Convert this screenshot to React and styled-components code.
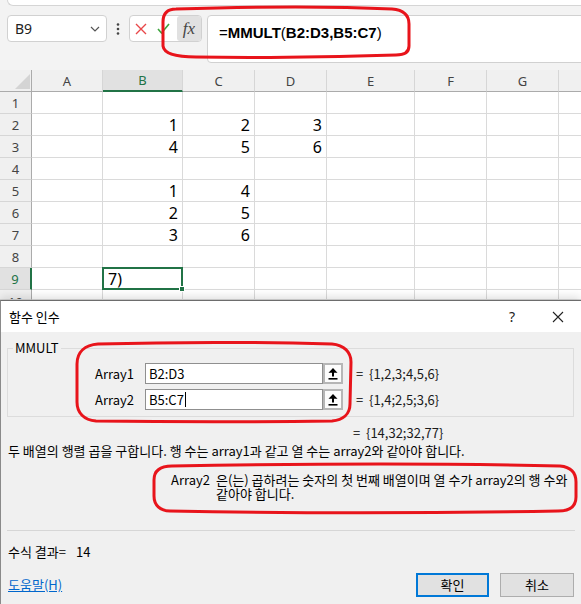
import React from 'react';
import styled, { createGlobalStyle } from 'styled-components';

const Global = createGlobalStyle`
  html, body { margin: 0; padding: 0; background: #f3f3f3; overflow: hidden; }
  body { font-family: "Noto Sans", "Noto Sans CJK KR", sans-serif; }
  * { box-sizing: border-box; }
`;

const Page = styled.div`
  position: relative;
  width: 581px;
  height: 604px;
  overflow: hidden;
  display: flex;
  flex-direction: column;
  background: #f3f3f3;
`;

const RibbonEdge = styled.div`
  height: 6px;
  margin-left: 7px;
  background: #fff;
  border-left: 1px solid #d5d5d5;
  border-bottom: 1px solid #d5d5d5;
  border-bottom-left-radius: 6px;
`;

const FormulaBar = styled.div`
  display: flex;
  align-items: flex-start;
  margin-top: 9px;
  padding-left: 7px;
  height: 48px;
`;

const NameBox = styled.div`
  width: 100px;
  height: 27px;
  background: #fff;
  border: 1px solid #d1d1d1;
  border-radius: 4px;
  display: flex;
  align-items: center;
  justify-content: space-between;
  padding: 0 6px 0 7px;
  font-family: "Noto Sans", sans-serif;
  font-size: 14px;
  color: #222;
`;

const Grip = styled.div`
  width: 22px;
  height: 27px;
  display: flex;
  align-items: center;
  justify-content: center;
`;

const EditButtons = styled.div`
  width: 73px;
  height: 27px;
  background: #fff;
  border: 1px solid #d1d1d1;
  border-radius: 4px;
  display: flex;
  align-items: center;
  padding-left: 5px;
`;

const IconSlot = styled.span`
  display: flex;
  align-items: center;
  margin-right: ${p => p.$gap || 0}px;
`;

const FxBox = styled.span`
  width: 24px;
  height: 25px;
  background: #e1e1e1;
  border-radius: 3px;
  display: flex;
  align-items: center;
  justify-content: center;
  font-family: "Liberation Serif", serif;
  font-style: italic;
  font-size: 17px;
  color: #444;
`;

const FormulaInput = styled.div`
  flex: 1;
  margin-left: 5px;
  margin-right: -6px;
  height: 48px;
  background: #fff;
  border: 1px solid #d1d1d1;
  border-radius: 4px 0 0 4px;
  padding: 7px 0 0 11px;
  font-family: "Liberation Sans", sans-serif;
  font-size: 15px;
  line-height: 20px;
  color: #000;
`;

const Token = styled.span`
  font-weight: ${p => (p.$bold ? 700 : 400)};
`;

const Sheet = styled.div`
  margin-top: 7px;
  display: grid;
  grid-template-columns: 32px 71px 80px 72px 72px 88px 72px 72px 72px;
  grid-template-rows: repeat(10, 22px) 10px;
  background: #fff;
  overflow: hidden;
  width: 581px;
`;

const Corner = styled.div`
  background: #f0f0f0;
  border-right: 1px solid #ababab;
  border-bottom: 1px solid #ababab;
  display: flex;
  align-items: flex-end;
  justify-content: flex-end;
  padding: 0 1px 2px 0;
`;

const ColHead = styled.div`
  background: ${p => (p.$active ? '#e1e1e1' : '#f0f0f0')};
  color: ${p => (p.$active ? '#217346' : '#444')};
  border-right: 1px solid #d6d6d6;
  border-bottom: ${p => (p.$active ? '2px solid #217346' : '1px solid #ababab')};
  display: flex;
  align-items: center;
  justify-content: center;
  font-size: 13px;
`;

const RowHead = styled.div`
  background: ${p => (p.$active ? '#e1e1e1' : '#f0f0f0')};
  color: ${p => (p.$active ? '#217346' : '#444')};
  border-right: ${p => (p.$active ? '2px solid #217346' : '1px solid #ababab')};
  border-bottom: 1px solid #d6d6d6;
  display: flex;
  align-items: ${p => (p.$partial ? 'flex-start' : 'center')};
  justify-content: center;
  font-size: 13px;
  line-height: ${p => (p.$partial ? '10px' : '22px')};
  padding-top: ${p => (p.$partial ? '7px' : '0')};
  overflow: hidden;
`;

const Cell = styled.div`
  position: relative;
  border-right: 1px solid #dadada;
  border-bottom: 1px solid #dadada;
  display: flex;
  align-items: center;
  justify-content: ${p => (p.$left ? 'flex-start' : 'flex-end')};
  padding: 0 4px 0 5px;
  font-family: "Noto Sans", sans-serif;
  font-size: 16px;
  color: #000;
  z-index: ${p => (p.$selected ? 2 : 0)};
  ${p =>
    p.$selected &&
    `&::after { content: ''; position: absolute; top: -1px; left: -1px; right: -1px; bottom: -1px; border: 2px solid #217346; pointer-events: none; }`}
`;

const FillHandle = styled.span`
  position: absolute;
  right: -3px;
  bottom: -3px;
  width: 6px;
  height: 6px;
  background: #217346;
  border: 1px solid #fff;
  z-index: 3;
`;

const Dialog = styled.div`
  flex: 1;
  min-height: 0;
  display: flex;
  flex-direction: column;
  border-top: 1px solid #6d6d6d;
  border-left: 1px solid #8a8a8a;
  background: #f0f0f0;
  box-shadow: 0 -3px 9px rgba(0, 0, 0, 0.13);
  font-family: "Noto Sans CJK KR", "Noto Sans", sans-serif;
  font-size: 13px;
  line-height: 14px;
  color: #000;
  position: relative;
  z-index: 5;
`;

const TitleBar = styled.div`
  height: 31px;
  background: #fff;
  display: flex;
  align-items: center;
  padding-left: 8px;
`;

const Title = styled.div`
  flex: 1;
`;

const TitleButton = styled.div`
  width: ${p => p.$w}px;
  display: flex;
  justify-content: center;
  align-items: center;
  font-family: "Noto Sans", sans-serif;
  font-size: 14px;
  color: #222;
`;

const Body = styled.div`
  flex: 1;
  display: flex;
  flex-direction: column;
  padding: 0 7px 7px 6px;
`;

const Group = styled.fieldset`
  margin: 9px 0 0;
  padding: 8px 5px 6px 5px;
  border: 1px solid #dcdcdc;
  min-width: 0;
`;

const GroupLabel = styled.legend`
  padding: 0 2px;
  line-height: 14px;
`;

const ArgList = styled.div`
  display: flex;
  flex-direction: column;
  gap: 5px;
`;

const ArgRow = styled.div`
  display: flex;
  align-items: center;
  height: 21px;
`;

const ArgLabel = styled.div`
  width: 121px;
  margin-right: 11px;
  text-align: right;
`;

const ArgInput = styled.div`
  width: 178px;
  height: 21px;
  background: #fff;
  border: 1px solid #8f8f8f;
  display: flex;
  align-items: center;
  padding-left: 3px;
`;

const Caret = styled.span`
  display: inline-block;
  width: 1px;
  height: 15px;
  background: #000;
  margin-left: 1px;
`;

const RefButton = styled.div`
  width: 20px;
  height: 21px;
  background: #fcfcfc;
  border: 2px solid #b6b6b6;
  display: flex;
  align-items: center;
  justify-content: center;
`;

const Equals = styled.span`
  margin-left: ${p => p.$ml ?? 13}px;
  width: 8px;
`;

const Value = styled.span`
  margin-left: 5px;
  color: #1a1a1a;
`;

const ResultRow = styled.div`
  margin-top: 9px;
  padding-left: 346px;
  display: flex;
`;

const Description = styled.div`
  margin-top: 4px;
  padding-left: 1px;
  white-space: nowrap;
`;

const ArgHelp = styled.div`
  margin-top: 15px;
  padding-left: 164px;
  display: grid;
  grid-template-columns: 45px auto;
`;

const HelpLine = styled.div`
  white-space: nowrap;
`;

const Separator = styled.div`
  margin-top: 29px;
  height: 1px;
  background: #d6d6d6;
  margin-right: -1px;
`;

const ResultLine = styled.div`
  margin-top: 14px;
  padding-left: 1px;
  display: flex;
  gap: 10px;
`;

const Footer = styled.div`
  margin-top: 14px;
  height: 24px;
  display: flex;
  align-items: center;
  padding-left: 1px;
`;

const HelpLink = styled.a`
  flex: 1;
  color: #0066cc;
  text-decoration: underline;
`;

const Button = styled.div`
  width: ${p => p.$w}px;
  height: 24px;
  margin-left: ${p => p.$ml || 0}px;
  background: #e1e1e1;
  border: ${p => (p.$primary ? '2px solid #0078d7' : '1px solid #adadad')};
  display: flex;
  align-items: center;
  justify-content: center;
`;

const Overlay = styled.svg`
  position: absolute;
  left: 0;
  top: 0;
  width: 581px;
  height: 604px;
  pointer-events: none;
  z-index: 20;
`;

const ChevronIcon = () => (
  <svg width="10" height="6" viewBox="0 0 10 6">
    <polyline points="1,1 5,5 9,1" fill="none" stroke="#555" strokeWidth="1.2" />
  </svg>
);

const DotsIcon = () => (
  <svg width="4" height="12" viewBox="0 0 4 12">
    <circle cx="2" cy="1.5" r="1.3" fill="#444" />
    <circle cx="2" cy="6" r="1.3" fill="#444" />
    <circle cx="2" cy="10.5" r="1.3" fill="#444" />
  </svg>
);

const CancelIcon = () => (
  <svg width="12" height="12" viewBox="0 0 12 12">
    <path d="M1 1 L11 11 M11 1 L1 11" stroke="#e8484a" strokeWidth="1.4" fill="none" />
  </svg>
);

const CheckIcon = () => (
  <svg width="13" height="11" viewBox="0 0 13 11">
    <path d="M1 6 L4.5 10 L12 1" stroke="#3fa53f" strokeWidth="1.6" fill="none" />
  </svg>
);

const CornerTriangle = () => (
  <svg width="15" height="15" viewBox="0 0 15 15">
    <polygon points="15,0 15,15 0,15" fill="#d4d4d4" />
  </svg>
);

const RefIcon = () => (
  <svg width="10" height="12" viewBox="0 0 10 12">
    <path d="M5 0 L9.5 4.8 L6 4.8 L6 8.5 L4 8.5 L4 4.8 L0.5 4.8 Z" fill="#000" />
    <rect x="0.5" y="10" width="9" height="1.6" fill="#000" />
  </svg>
);

const CloseIcon = () => (
  <svg width="12" height="12" viewBox="0 0 12 12">
    <path d="M1 1 L11 11 M11 1 L1 11" stroke="#222" strokeWidth="1.1" fill="none" />
  </svg>
);

const COLS = ['A', 'B', 'C', 'D', 'E', 'F', 'G', 'H'];
const DATA = {
  2: { B: 1, C: 2, D: 3 },
  3: { B: 4, C: 5, D: 6 },
  5: { B: 1, C: 4 },
  6: { B: 2, C: 5 },
  7: { B: 3, C: 6 },
};

function SheetGrid() {
  const rows = [];
  for (let r = 1; r <= 10; r++) rows.push(r);
  return (
    <Sheet>
      <Corner>
        <CornerTriangle />
      </Corner>
      {COLS.map(c => (
        <ColHead key={c} $active={c === 'B'}>
          {c}
        </ColHead>
      ))}
      {rows.map(r => (
        <React.Fragment key={r}>
          <RowHead $active={r === 9} $partial={r === 10}>
            {r}
          </RowHead>
          {COLS.map(c => {
            const selected = r === 9 && c === 'B';
            return (
              <Cell key={c} $selected={selected} $left={selected}>
                {selected ? '7)' : DATA[r] && DATA[r][c]}
                {selected && <FillHandle />}
              </Cell>
            );
          })}
        </React.Fragment>
      ))}
    </Sheet>
  );
}

export default function App() {
  return (
    <>
      <Global />
      <Page>
        <RibbonEdge />
        <FormulaBar>
          <NameBox>
            <span>B9</span>
            <ChevronIcon />
          </NameBox>
          <Grip>
            <DotsIcon />
          </Grip>
          <EditButtons>
            <IconSlot $gap={10}>
              <CancelIcon />
            </IconSlot>
            <IconSlot $gap={7}>
              <CheckIcon />
            </IconSlot>
            <FxBox>fx</FxBox>
          </EditButtons>
          <FormulaInput>
            <Token>=</Token>
            <Token $bold>MMULT</Token>
            <Token>(</Token>
            <Token $bold>B2:D3,B5:C7</Token>
            <Token>)</Token>
          </FormulaInput>
        </FormulaBar>

        <SheetGrid />

        <Dialog>
          <TitleBar>
            <Title>함수 인수</Title>
            <TitleButton $w={46}>?</TitleButton>
            <TitleButton $w={46}>
              <CloseIcon />
            </TitleButton>
          </TitleBar>
          <Body>
            <Group>
              <GroupLabel>MMULT</GroupLabel>
              <ArgList>
                <ArgRow>
                  <ArgLabel>Array1</ArgLabel>
                  <ArgInput>B2:D3</ArgInput>
                  <RefButton>
                    <RefIcon />
                  </RefButton>
                  <Equals>=</Equals>
                  <Value>{'{1,2,3;4,5,6}'}</Value>
                </ArgRow>
                <ArgRow>
                  <ArgLabel>Array2</ArgLabel>
                  <ArgInput>
                    B5:C7
                    <Caret />
                  </ArgInput>
                  <RefButton>
                    <RefIcon />
                  </RefButton>
                  <Equals>=</Equals>
                  <Value>{'{1,4;2,5;3,6}'}</Value>
                </ArgRow>
              </ArgList>
            </Group>
            <ResultRow>
              <Equals $ml={0}>=</Equals>
              <Value>{'{14,32;32,77}'}</Value>
            </ResultRow>
            <Description>
              두 배열의 행렬 곱을 구합니다. 행 수는 array1과 같고 열 수는 array2와 같아야 합니다.
            </Description>
            <ArgHelp>
              <span>Array2</span>
              <div>
                <HelpLine>은(는) 곱하려는 숫자의 첫 번째 배열이며 열 수가 array2의 행 수와</HelpLine>
                <HelpLine>같아야 합니다.</HelpLine>
              </div>
            </ArgHelp>
            <Separator />
            <ResultLine>
              <span>수식 결과=</span>
              <span>14</span>
            </ResultLine>
            <Footer>
              <HelpLink>도움말(H)</HelpLink>
              <Button $w={73} $primary>
                확인
              </Button>
              <Button $w={74} $ml={11}>
                취소
              </Button>
            </Footer>
          </Body>
        </Dialog>

        <Overlay viewBox="0 0 581 604">
          <g fill="none" stroke="#e8141b" strokeWidth="3" strokeLinecap="round">
            <path d="M176 9 C 240 7, 330 6, 392 9 C 404 10, 409 16, 409 24 L 409 46 C 409 52, 404 55, 396 55 C 330 57, 250 58, 196 57 C 178 57, 164 54, 163 46 L 163 22 C 163 13, 168 9, 176 9 Z" />
            <path d="M98 344 C 170 342, 260 342, 332 344 C 344 345, 351 352, 351 362 L 350 404 C 350 414, 343 420, 332 421 C 260 422, 170 422, 96 421 C 84 420, 77 413, 77 402 L 77 364 C 77 352, 85 345, 98 344 Z" />
            <path d="M172 466 C 280 464, 440 463, 560 466 C 571 467, 576 473, 576 482 L 576 497 C 576 506, 570 511, 558 511 C 440 513, 280 513, 170 511 C 160 511, 154 505, 154 496 L 154 480 C 154 471, 160 466, 172 466 Z" />
          </g>
        </Overlay>
      </Page>
    </>
  );
}
